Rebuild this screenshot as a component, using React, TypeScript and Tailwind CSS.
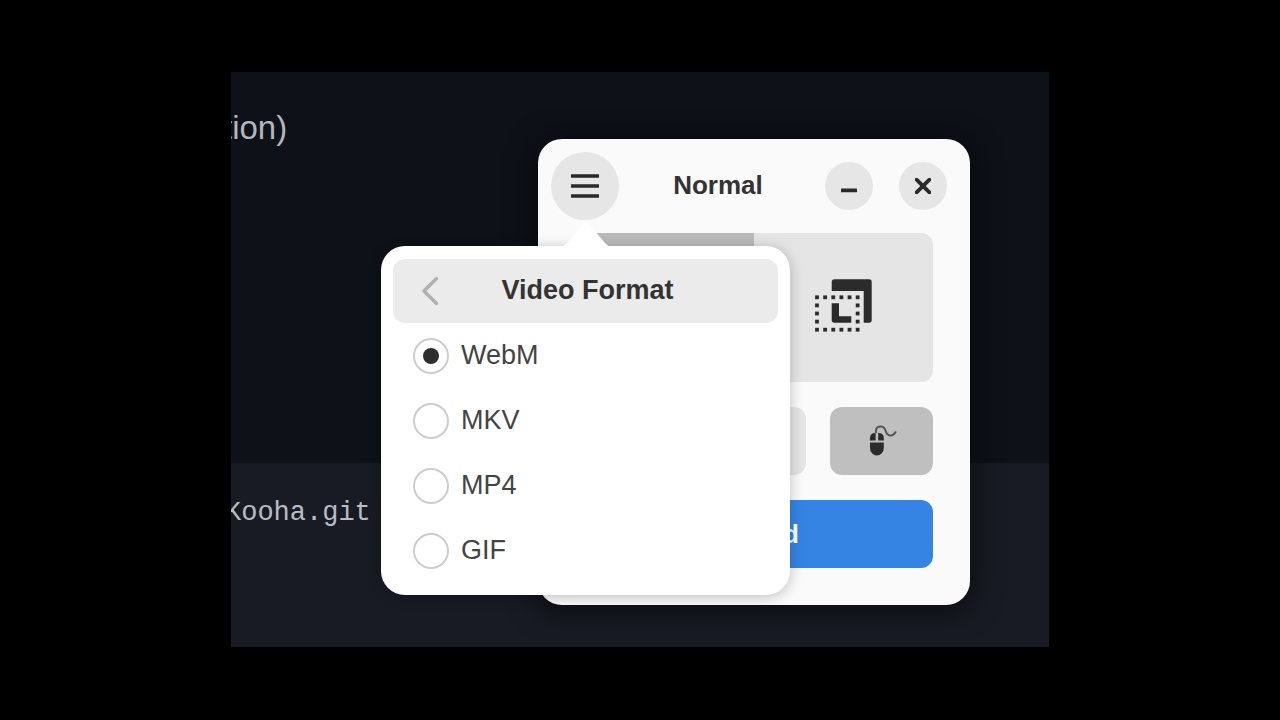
import { useState } from "react";

const FORMATS = ["WebM", "MKV", "MP4", "GIF"];

const DOT_COLS = [0, 1, 2, 3, 4, 5];
const DOT_ROWS = [0, 1, 2, 3, 4];

const MenuIcon = () => (
  <svg viewBox="0 0 28 26" className="h-[26px] w-7" fill="currentColor" aria-hidden="true">
    <path d="M0 1.200h28v3.600H0zM0 11.200h28v3.600H0zM0 21.200h28v3.600H0z" />
  </svg>
);

const MinimizeIcon = () => (
  <svg viewBox="0 0 16 16" className="size-4" fill="currentColor" aria-hidden="true">
    <rect y="10.5" width="16" height="3.8" rx="0.5" />
  </svg>
);

const CloseIcon = () => (
  <svg viewBox="0 0 16 16" className="size-4" fill="none" stroke="currentColor" strokeWidth="3.8" aria-hidden="true">
    <path d="M1.600 1.600l12.800 12.800M14.400 1.600L1.600 14.400" strokeLinecap="round" />
  </svg>
);

const BackIcon = () => (
  <svg viewBox="0 0 18 30" className="h-[30px] w-[18px]" fill="none" stroke="currentColor" strokeWidth="3.4" aria-hidden="true">
    <path d="M15.5 2.5L3 15l12.5 12.5" strokeLinecap="round" strokeLinejoin="round" />
  </svg>
);

const SelectionIcon = () => (
  <svg viewBox="0 0 58 54" className="h-[54px] w-[58px]" fill="currentColor" aria-hidden="true">
    <path d="M16.700 12V3q0-2.700 2.700-2.700h34.600q2.700 0 2.700 2.700v38q0 2.700-2.700 2.700h-5.300V12z" />
    <path d="M16.700 24.300h7.300v13h12.300v6.400H19.400q-2.700 0-2.700-2.700z" />
    {DOT_ROWS.map((r) =>
      DOT_COLS.filter((c) => r === 0 || r === 4 || c === 0 || c === 5).map((c) => (
        <rect key={`${r}-${c}`} x={0.1 + c * 8.13} y={16.4 + r * 8.1} width="3.8" height="3.8" />
      ))
    )}
  </svg>
);

const MouseIcon = () => (
  <svg viewBox="-2 0 28 32" className="h-8 w-7 overflow-visible" aria-hidden="true">
    <path d="M7 8V6C7 0 15 0 16.500 5.500S23 13 27 6.500" fill="none" stroke="#555" strokeWidth="2" />
    <path
      d="M6.600 8v7.500H1V13q0-5 5.600-5zM9.200 8q5.600 0 5.600 5v2.500H9.200zM1 17.500h13.800V23a6.900 7.500 0 0 1-13.800 0z"
      fill="#2b2b2b"
    />
  </svg>
);

const DisplayIcon = () => (
  <svg viewBox="0 0 16 16" className="size-12" fill="currentColor" aria-hidden="true">
    <path d="M1 2h14v10H1zM5 13h6v2H5z" />
  </svg>
);

const SpeakerIcon = () => (
  <svg viewBox="0 0 16 16" className="size-7" fill="currentColor" aria-hidden="true">
    <path d="M1 5h3l5-4v14l-5-4H1z" />
  </svg>
);

const MicIcon = () => (
  <svg viewBox="0 0 16 16" className="size-7" fill="currentColor" aria-hidden="true">
    <rect x="5" width="6" height="10" rx="3" />
    <path d="M7 11h2v5H7z" />
  </svg>
);

function FormatPopover() {
  const [format, setFormat] = useState("WebM");

  return (
    <div className="absolute top-[107px] -left-[157px] w-[409px] rounded-3xl bg-white p-3 pt-[13px] text-[27px] shadow-[0_2px_14px_rgba(0,0,0,0.24)]">
      <svg
        viewBox="0 0 50 26"
        className="absolute -top-[25px] left-[180px] h-[26px] w-[50px] text-white"
        fill="currentColor"
        aria-hidden="true"
      >
        <path d="M0 26q3-1 6-4L22.500 2.500q2.500-2.500 5 0L44 22q3 3 6 4z" />
      </svg>

      <button
        type="button"
        className="relative flex h-16 w-full items-center justify-center rounded-xl bg-[#ebebeb] font-bold"
      >
        <span className="absolute left-7 text-[#b0b0b0]">
          <BackIcon />
        </span>
        <span className="pb-0.5 pl-1">Video Format</span>
      </button>

      <div role="radiogroup" aria-label="Video Format">
        {FORMATS.map((f) => (
          <label key={f} className="flex h-[65px] items-center gap-3 pl-5">
            <input
              type="radio"
              name="format"
              value={f}
              checked={format === f}
              onChange={() => setFormat(f)}
              className="grid size-9 appearance-none place-items-center rounded-full border-2 border-[#cdcdcd] before:size-4 before:rounded-full checked:before:bg-[#2e2e2e]"
            />
            <span className="pb-0.5 text-[#444]">{f}</span>
          </label>
        ))}
      </div>
    </div>
  );
}

function RecorderWindow() {
  return (
    <section className="absolute top-[67px] right-[79px] w-[432px] rounded-3xl bg-[#fafafa] text-[26px] leading-8 text-[#333] shadow-[0_4px_28px_4px_rgba(0,0,0,0.5)]">
      <header className="flex items-center pt-[13px] pr-[23px] pl-[13px] text-[#2a2a2a]">
        <button
          type="button"
          aria-label="Main menu"
          className="grid size-[68px] place-items-center rounded-full bg-[#e6e6e6]"
        >
          <MenuIcon />
        </button>
        <h1 className="flex-1 pr-2 pb-0.5 text-center font-bold text-[#333]">Normal</h1>
        <div className="flex gap-[26px]">
          <button type="button" aria-label="Minimize" className="grid size-12 place-items-center rounded-full bg-[#e6e6e6]">
            <MinimizeIcon />
          </button>
          <button type="button" aria-label="Close" className="grid size-12 place-items-center rounded-full bg-[#e6e6e6]">
            <CloseIcon />
          </button>
        </div>
      </header>

      <div className="flex flex-col gap-[25px] px-[37px] pt-[13px] pb-[37px] text-[#2b2b2b]">
        <div className="grid h-[149px] grid-cols-2 overflow-hidden rounded-xl">
          <button type="button" aria-label="Record screen" className="grid place-items-center bg-[#bababa]">
            <DisplayIcon />
          </button>
          <button type="button" aria-label="Record selection" className="grid place-items-center bg-[#e5e5e5] pb-1">
            <SelectionIcon />
          </button>
        </div>
        <div className="grid h-[68px] grid-cols-3 gap-6">
          <button type="button" aria-label="Desktop audio" className="grid place-items-center rounded-xl bg-[#e5e5e5]">
            <SpeakerIcon />
          </button>
          <button type="button" aria-label="Microphone" className="grid place-items-center rounded-xl bg-[#e5e5e5]">
            <MicIcon />
          </button>
          <button type="button" aria-label="Show pointer" className="grid place-items-center rounded-xl bg-[#bfbfbf]">
            <MouseIcon />
          </button>
        </div>
        <button type="button" className="h-[68px] rounded-xl bg-[#3584e4] font-bold text-white">
          Record
        </button>
      </div>

      <FormatPopover />
    </section>
  );
}

export default function App() {
  return (
    <main
      className="flex min-h-screen bg-black px-[231px] pt-[72px] pb-[73px]"
      style={{ fontFamily: "'Liberation Sans', Arial, sans-serif" }}
    >
      <div className="relative flex flex-1 flex-col overflow-hidden bg-[#0d1118]">
        <p className="-ml-2 flex-1 pt-9 text-[33px] leading-10 text-[#b4b6ba]">tion)</p>
        <pre
          className="h-[184px] bg-[#171b23] pt-8 text-[27px] leading-9 text-[#b9bdc3]"
          style={{ fontFamily: "'Liberation Mono', monospace" }}
        >
          <code className="-ml-[6px]">Kooha.git</code>
        </pre>
        <RecorderWindow />
      </div>
    </main>
  );
}
